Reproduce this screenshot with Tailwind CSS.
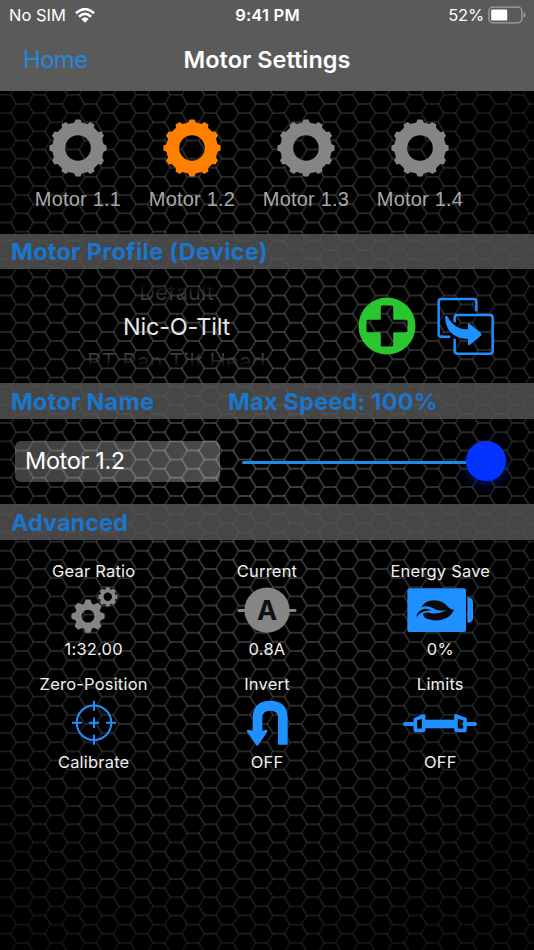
<!DOCTYPE html>
<html lang="en">
<head>
  <meta charset="UTF-8">
  <meta name="viewport" content="width=device-width, initial-scale=1.0">
  <title>Motor Settings</title>
  <script src="https://cdn.jsdelivr.net/npm/@tailwindcss/browser@4"></script>
</head>
<body class="bg-black text-white font-['Inter',sans-serif] overflow-hidden">
  <div class="relative isolate w-[534px] h-[950px] overflow-hidden">

    <!-- Honeycomb background -->
    <svg class="absolute inset-0 -z-10" width="534" height="950">
      <defs>
        <radialGradient id="light" gradientUnits="userSpaceOnUse" cx="0" cy="0" r="1" gradientTransform="translate(250 445) scale(420 560)">
          <stop offset="0" stop-color="#fff" stop-opacity=".25"/>
          <stop offset=".4" stop-color="#fff" stop-opacity=".18"/>
          <stop offset="1" stop-color="#fff" stop-opacity=".07"/>
        </radialGradient>
        <mask id="glow"><rect width="534" height="950" fill="#fff"/></mask>
      </defs>
      <g fill="none" stroke="url(#light)" stroke-width="1.9">
        <path id="hex-main"/>
        <path id="hex-dim" opacity=".75"/>
      </g>
    </svg>

    <!-- Status bar + nav -->
    <header class="h-[91px] bg-[#5a5a5a]">
      <div class="grid grid-cols-3 items-center h-[30px] pl-[9px] pr-[8px] text-[16.5px]">
        <div class="flex items-center gap-[9px]">
          <span>No SIM</span>
          <svg width="20" height="15" viewBox="0 0 60 45" fill="none" stroke="#fff" stroke-width="8">
            <path d="M3 16Q30-9 57 16"/>
            <path d="M12 26Q30 9 48 26"/>
            <path d="M19 33Q30 23 41 33L30 44Z" fill="#fff" stroke="none"/>
          </svg>
        </div>
        <span class="text-center font-semibold tracking-[.2px] whitespace-nowrap">9:41 PM</span>
        <div class="flex items-center justify-end gap-[4px]">
          <span class="tracking-[-.2px]">52%</span>
          <svg width="38" height="18" viewBox="0 0 38 18">
            <rect x=".9" y="1.2" width="33" height="15.6" rx="4" fill="none" stroke="#a3a3a3" stroke-width="1.3"/>
            <rect x="3.2" y="3.6" width="16" height="10.8" rx="1.2" fill="#fff"/>
            <path d="M35.6 6.2q2 1 2 2.8t-2 2.8z" fill="#a3a3a3"/>
          </svg>
        </div>
      </div>
      <div class="grid grid-cols-[1fr_auto_1fr] items-center h-[59px] pl-[23px] pr-[23px]">
        <span class="text-[24px] tracking-[-.7px] text-[#2487e0]">Home</span>
        <h1 class="text-[23.5px] font-semibold">Motor Settings</h1>
      </div>
    </header>

    <!-- Motor selection -->
    <section class="flex h-[143px] pl-[21px] pt-[28px] font-['Liberation_Sans',sans-serif] text-[20px] tracking-[.2px] leading-[24px] text-[#a8a8a8]">
      <div class="w-[114px] flex flex-col items-center gap-[10px]">
        <svg width="58" height="58" viewBox="-29 -29 58 58"><path data-gear="0 0 25.6 28.6 12 12.8 3.7 2.5" fill="#858585" fill-rule="evenodd"/></svg>
        <span>Motor 1.1</span>
      </div>
      <div class="w-[114px] flex flex-col items-center gap-[10px]">
        <svg width="58" height="58" viewBox="-29 -29 58 58"><path data-gear="0 0 25.6 28.6 12 12.8 3.7 2.5" fill="#ff8000" fill-rule="evenodd"/></svg>
        <span>Motor 1.2</span>
      </div>
      <div class="w-[114px] flex flex-col items-center gap-[10px]">
        <svg width="58" height="58" viewBox="-29 -29 58 58"><path data-gear="0 0 25.6 28.6 12 12.8 3.7 2.5" fill="#858585" fill-rule="evenodd"/></svg>
        <span>Motor 1.3</span>
      </div>
      <div class="w-[114px] flex flex-col items-center gap-[10px]">
        <svg width="58" height="58" viewBox="-29 -29 58 58"><path data-gear="0 0 25.6 28.6 12 12.8 3.7 2.5" fill="#858585" fill-rule="evenodd"/></svg>
        <span>Motor 1.4</span>
      </div>
    </section>

    <h2 class="h-[35px] pl-[11px] bg-[#535353]/84 text-[#1a76cc] text-[23.5px] tracking-[.25px] leading-[36px] font-bold">Motor Profile (Device)</h2>

    <!-- Profile picker -->
    <section class="flex h-[114px]">
      <div class="w-[353px] pt-[9px] text-center">
        <div class="h-[28px] text-[22px] leading-[28px] bg-linear-to-b from-transparent from-20% to-[#454545] to-80% bg-clip-text text-transparent">Default</div>
        <div class="h-[41px] text-[23.5px] tracking-[-.25px] leading-[41px] text-[#e6e6e6]">Nic-O-Tilt</div>
        <div class="h-[28px] text-[22px] tracking-[.3px] leading-[28px] bg-linear-to-b from-[#454545] from-20% to-transparent to-75% bg-clip-text text-transparent">PT Pan Tilt Head</div>
      </div>
      <svg class="mt-[28px] ml-[5px]" width="58" height="58" viewBox="-29 -29 58 58">
        <path fill="#2ac62f" fill-rule="evenodd" d="M0-28.5A28.5 28.5 0 1 1 0 28.5A28.5 28.5 0 1 1 0-28.5ZM-4.6-20.5Q-6.2-20.5-6.2-19V-7.4Q-6.2-6.2-7.4-6.2H-19Q-20.5-6.2-20.5-4.6V4.6Q-20.5 6.2-19 6.2H-7.4Q-6.2 6.2-6.2 7.4V19Q-6.2 20.5-4.6 20.5H4.6Q6.2 20.5 6.2 19V7.4Q6.2 6.2 7.4 6.2H19Q20.5 6.2 20.5 4.6V-4.6Q20.5-6.2 19-6.2H7.4Q6.2-6.2 6.2-7.4V-19Q6.2-20.5 4.6-20.5Z"/>
      </svg>
      <svg class="mt-[28px] ml-[19px]" width="60" height="60" viewBox="285 81 180 180" fill="none" stroke="#1e90ff" stroke-width="7.5">
        <path d="M409 124V94Q409 87 402 87H303Q296 87 296 94V193Q296 200 303 200H331"/>
        <path d="M344 157V142Q344 135 351 135H451Q458 135 458 142V244Q458 251 451 251H351Q344 251 344 244V206"/>
        <path d="M315 140Q317 134 323 140Q343 178 384 178V163Q384 158 389 161L423 189Q426 193 423 197L389 225Q384 228 384 222V207Q318 204 315 140Z" fill="#1e90ff" stroke="none"/>
      </svg>
    </section>

    <div class="flex h-[36px] pl-[11px] bg-[#535353]/84 text-[#1a76cc] text-[23.5px] tracking-[.2px] leading-[37px] font-bold">
      <h2 class="w-[217px]">Motor Name</h2>
      <h2>Max Speed: 100%</h2>
    </div>

    <!-- Name + speed slider -->
    <section class="flex h-[85px] pt-[22px] pl-[15px]">
      <div class="w-[205px] h-[41px] pl-[10px] rounded-[6px] bg-linear-to-r from-white/25 to-white/29 text-[23.5px] tracking-[-.35px] leading-[39px]">Motor 1.2</div>
      <div class="relative ml-[22px] w-[264px] h-[41px]">
        <div class="mt-[20px] h-[3px] w-[230px] rounded-full bg-[#1f8ae8]"></div>
        <div class="absolute right-0 top-0 size-[40px] rounded-full bg-[#0433ff] shadow-[0_4px_10px_#0433ff60]"></div>
      </div>
    </section>

    <h2 class="h-[36px] pl-[11px] bg-[#535353]/84 text-[#1a76cc] text-[23.5px] leading-[37px] font-bold">Advanced</h2>

    <!-- Advanced options -->
    <section class="grid grid-cols-3 w-[520px] ml-[7px] pt-[19px] text-[16.5px] tracking-[.2px] leading-[24px] text-[#f0f0f0] text-center">
      <div class="h-[113px] flex flex-col items-center">
        <span>Gear Ratio</span>
        <svg class="mt-[4px] mb-[2px]" width="50" height="48" viewBox="69 587 50 48">
          <path data-gear="88 616.2 12.3 16.6 8 6.4 4.2 2.4" fill="#858585" fill-rule="evenodd"/>
          <path data-gear="107.8 596.8 7.3 9.6 8 4.2 2.6 1.7" fill="#858585" fill-rule="evenodd"/>
        </svg>
        <span>1:32.00</span>
      </div>
      <div class="h-[113px] flex flex-col items-center">
        <span>Current</span>
        <svg class="mt-[4px] mb-[2px]" width="60" height="48" viewBox="-30 -24 60 48">
          <path d="M-29.3-1.9H29.3V.9H-29.3Z" fill="#858585"/>
          <circle cy="-.8" r="22.6" fill="#858585"/>
          <text y="9.2" text-anchor="middle" font-size="27" letter-spacing="0" font-weight="700" fill="#101010">A</text>
        </svg>
        <span>0.8A</span>
      </div>
      <div class="h-[113px] flex flex-col items-center">
        <span>Energy Save</span>
        <svg class="mt-[4px] mb-[2px]" width="68" height="48" viewBox="108 110 204 144">
          <path fill="#1e90ff" d="M118 114H282Q288 114 288 120V239Q288 245 282 245H118Q112 245 112 239V120Q112 114 118 114Z"/>
          <path fill="#1e90ff" d="M292 141H298Q309 144 309 155V203Q309 215 298 217H292Z"/>
          <g fill="#0a0a0a">
            <path d="M154 171Q165 150 193 150Q220 151 234 170Q242 179 252 178Q245 194 231 202Q205 216 173 206Q160 202 159 190Q170 183 184 189Q205 192 231 179Q205 185 188 173Q170 164 154 171Z"/>
            <path d="M138 200Q146 176 166 175Q176 175 184 181Q158 177 138 200Z"/>
          </g>
        </svg>
        <span>0%</span>
      </div>
      <div class="h-[113px] flex flex-col items-center">
        <span>Zero-Position</span>
        <svg class="mt-[4px] mb-[2px]" width="48" height="48" viewBox="-24 -24 48 48" fill="none" stroke="#1e90ff" stroke-width="2">
          <circle cy="-1.2" r="17.3"/>
          <path d="M-22-1.2H-12M12-1.2H22M0-23.2V-13.2M0 10.8V20.8M-5.2-1.2H5.2M0-6.4V4"/>
        </svg>
        <span>Calibrate</span>
      </div>
      <div class="h-[113px] flex flex-col items-center">
        <span>Invert</span>
        <svg class="mt-[4px] mb-[2px]" width="48" height="48" viewBox="129 448 144 144" fill="#1e90ff">
          <path d="M234 582V502Q234 480 211 480Q187 480 187 502V540L198 537Q204 537 202 543L175 583Q171 587 168 583L141 543Q139 537 145 537L158 540V502Q159 450 211 450Q263 451 263 502V582Z"/>
        </svg>
        <span>OFF</span>
      </div>
      <div class="h-[113px] flex flex-col items-center">
        <span>Limits</span>
        <svg class="mt-[4px] mb-[2px]" width="76" height="48" viewBox="96 449 228 144" fill="none" stroke="#1e90ff">
          <path d="M105 521H135M283 521H315" stroke-width="12" stroke-linecap="round"/>
          <path d="M164 521H256" stroke-width="26"/>
          <path d="M161 497V540H136V507ZM258 497V540H285V507Z" stroke-width="11" stroke-linejoin="round"/>
        </svg>
        <span>OFF</span>
      </div>
    </section>
  </div>

  <script>
    // Honeycomb edges, the rising diagonals go to the dimmer path
    let main = '', dim = '';
    for (let col = -1; col < 33; col++) {
      const x = 5 + col * 17.1;
      for (let row = -1; row < 54; row++) {
        const y = 3.68 + row * 18.236 + (col % 2 ? 9.118 : 0);
        main += `M${x - 5.7} ${y}H${x + 5.7}L${x + 11.4} ${y + 9.118}`;
        dim += `M${x + 5.7} ${y}L${x + 11.4} ${y - 9.118}`;
      }
    }
    document.getElementById('hex-main').setAttribute('d', main);
    document.getElementById('hex-dim').setAttribute('d', dim);

    // data-gear: cx cy bodyRadius tipRadius teeth holeRadius rootHalfWidth tipHalfWidth
    document.querySelectorAll('[data-gear]').forEach(el => {
      const [cx, cy, body, tip, teeth, hole, root, top] = el.dataset.gear.split(' ').map(Number);
      const points = [];
      for (let i = 0; i < teeth; i++) {
        const a = i * 2 * Math.PI / teeth;
        [[-root, body], [-top, tip], [top, tip], [root, body]].forEach(([x, y]) => {
          points.push((cx + x * Math.cos(a) + y * Math.sin(a)).toFixed(2) + ' ' + (cy + x * Math.sin(a) - y * Math.cos(a)).toFixed(2));
        });
      }
      el.setAttribute('d', 'M' + points.join('L') + 'Z' +
        `M${cx - hole} ${cy}a${hole} ${hole} 0 1 0 ${hole * 2} 0a${hole} ${hole} 0 1 0 ${-hole * 2} 0Z`);
    });
  </script>
</body>
</html>
